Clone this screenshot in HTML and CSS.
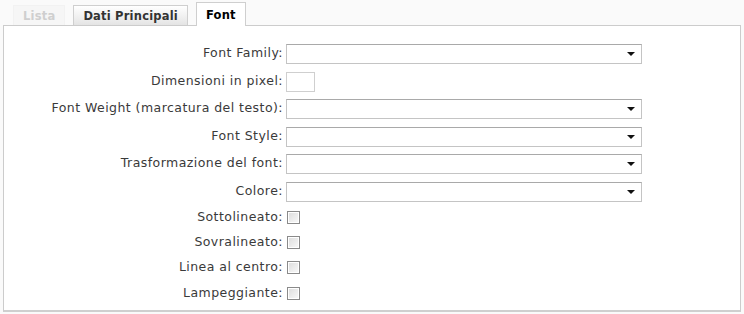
FILE: index.html
```html
<html>
    <head>
        <link rel="stylesheet" href="styles.css">
    </head>
    <body>
        <div class="tabs">
            <ul class="tab-bar">
                <li class="tab tab-disabled">Lista</li>
                <li class="tab">Dati Principali</li>
                <li class="tab tab-active">Font</li>
            </ul>
            <div class="panel">
                <form class="font-form">
                    <label>Font Family:</label>
                    <div class="select"><span class="arrow"></span></div>

                    <label>Dimensioni in pixel:</label>
                    <div class="text-small"></div>

                    <label>Font Weight (marcatura del testo):</label>
                    <div class="select"><span class="arrow"></span></div>

                    <label>Font Style:</label>
                    <div class="select"><span class="arrow"></span></div>

                    <label>Trasformazione del font:</label>
                    <div class="select"><span class="arrow"></span></div>

                    <label>Colore:</label>
                    <div class="select"><span class="arrow"></span></div>

                    <label class="check-label">Sottolineato:</label>
                    <div class="check-cell"><span class="check"></span></div>

                    <label class="check-label">Sovralineato:</label>
                    <div class="check-cell"><span class="check"></span></div>

                    <label class="check-label">Linea al centro:</label>
                    <div class="check-cell"><span class="check"></span></div>

                    <label class="check-label">Lampeggiante:</label>
                    <div class="check-cell"><span class="check"></span></div>
                </form>
            </div>
        </div>
    </body>
</html>
```

FILE: styles.css
```css
* { box-sizing: border-box; }

body {
    margin: 0;
    padding: 2px 3px 0 3px;
    background: #fafafa;
    font-family: "DejaVu Sans", Verdana, sans-serif;
    font-size: 12.5px;
    letter-spacing: 0.45px;
    color: #333;
}

.tab-bar {
    all: unset;
    display: flex;
    align-items: flex-end;
    height: 23px;
    padding-left: 10px;
    gap: 8px;
}

.tab {
    list-style: none;
    height: 20px;
    padding: 0 9px 0 9px;
    display: flex;
    align-items: center;
    font-weight: bold;
    font-size: 11.5px;
    letter-spacing: 0.2px;
    color: #333;
    border: 1px solid #cfcfcf;
    border-bottom: 0;
    background: linear-gradient(#ffffff, #e4e4e4);
}

.tab-disabled {
    color: #cfcfcf;
    border-color: #f2f2f2;
    background: #f6f6f6;
}

.tab-active {
    height: 24px;
    background: #fff;
    color: #000;
    margin-bottom: -1px;
    position: relative;
    z-index: 1;
}

.panel {
    background: #fff;
    border: 1px solid #cccccc;
    border-bottom: 2px solid #cfcfcf;
    height: 287px;
}

.font-form {
    display: grid;
    grid-template-columns: 279px auto;
    column-gap: 3px;
    padding-top: 18px;
    align-items: center;
}

.font-form label {
    text-align: right;
    height: 27.5px;
    line-height: 17px;
    color: #3a3a3a;
}

.font-form label.check-label {
    height: 25.2px;
    line-height: 15px;
}

.font-form > div {
    height: 27.5px;
}

.font-form > .check-cell {
    height: 25.2px;
    padding-top: 2px;
}

.select {
    position: relative;
}

.select::before {
    content: "";
    display: block;
    width: 354px;
    height: 18px;
    border: 1px solid #c4c4c4;
    border-top-color: #a9a9a9;
    background: #fff;
}

.arrow {
    position: absolute;
    left: 341px;
    top: 8px;
    border-left: 4px solid transparent;
    border-right: 4px solid transparent;
    border-top: 4px solid #111;
}

.text-small::before {
    content: "";
    display: block;
    width: 27px;
    height: 18px;
    border: 1px solid #cfcfcf;
    background: #fff;
}

.check {
    display: block;
    margin-left: 1px;
    width: 13px;
    height: 13px;
    border: 1px solid #8a8a8a;
    background: linear-gradient(135deg, #dcdcdc, #fafafa);
    box-shadow: inset 0 0 0 1px #fff;
}
```
